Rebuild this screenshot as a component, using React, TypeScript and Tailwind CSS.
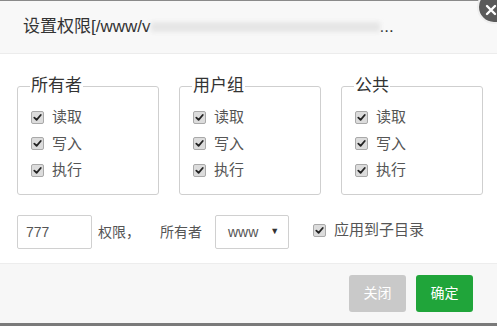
import React from "react";

const font = { fontFamily: '"Liberation Sans", "Noto Sans CJK SC", sans-serif' };

function Check() {
  return (
    <span className="inline-flex items-center justify-center w-[13px] h-[13px] rounded-[2px] border border-[#a9a9a9] bg-[#dcdcdc] shrink-0">
      <svg width="9" height="9" viewBox="0 0 10 10">
        <path d="M1.5 5.2 L4 7.6 L8.6 2.2" fill="none" stroke="#222" strokeWidth="2" strokeLinecap="round" strokeLinejoin="round" />
      </svg>
    </span>
  );
}

function Group({ title }: { title: string }) {
  return (
    <fieldset className="w-[142px] h-[120px] border border-[#cfcfcf] rounded-[3px] pl-[12px] pt-[7px]">
      <legend className="px-[1px] text-[17px] leading-[22px] text-[#333]">{title}</legend>
      {["读取", "写入", "执行"].map((t) => (
        <div key={t} className="flex items-center h-[26.5px] gap-[8px] pl-[1px] text-[15px] text-[#555]">
          <Check />
          <span>{t}</span>
        </div>
      ))}
    </fieldset>
  );
}

export default function App() {
  return (
    <div className="relative w-[497px] h-[326px] overflow-hidden bg-white flex flex-col" style={font}>
      <div className="h-[1px] bg-[#8a8a8a]" />
      <div className="h-[53px] bg-[#f8f8f8] border-b border-[#ececec] pl-[23px] flex items-center text-[17px] text-[#333]">
        <span>设置权限[/www/v</span>
        <span className="inline-block w-[229px] h-[10px] bg-[#e6e6e6] blur-[2px]" />
        <span>...</span>
      </div>

      <div className="flex gap-[20px] pl-[17px] pt-[21px]">
        <Group title="所有者" />
        <Group title="用户组" />
        <Group title="公共" />
      </div>

      <div className="flex items-center pl-[17px] mt-[20px] h-[34px] text-[14px] text-[#555]">
        <div className="w-[75px] h-[34px] border border-[#d0d0d0] rounded-[2px] flex items-center pl-[8px]">777</div>
        <span className="ml-[6px]">权限，</span>
        <span className="ml-[20px]">所有者</span>
        <div className="ml-[13px] w-[74px] h-[34px] border border-[#d0d0d0] rounded-[2px] flex items-center pl-[12px] gap-[12px]">
          <span>www</span>
          <span className="text-[9px] text-[#333]">▼</span>
        </div>
        <div className="ml-[24px] flex items-center gap-[8px] -mt-[4px] text-[15px]">
          <Check />
          <span>应用到子目录</span>
        </div>
      </div>

      <div className="mt-[14px] h-[60px] bg-[#f7f7f7] border-t border-[#ededed] flex items-center justify-end gap-[10px] pr-[24px]">
        <button className="w-[57px] h-[37px] rounded-[3px] bg-[#c9c9c9] text-white text-[14px]">关闭</button>
        <button className="w-[57px] h-[37px] rounded-[3px] bg-[#20a53a] text-white text-[14px]">确定</button>
      </div>
      <div className="flex-1 bg-[#7a7a7a]" />

      <div className="absolute right-[-14px] top-[-10px] w-[34px] h-[34px] rounded-full bg-[#5a5a5a] border-2 border-[#eee] flex items-center justify-center">
        <svg width="12" height="12" viewBox="0 0 12 12" className="-ml-[6px] mt-[6px]">
          <path d="M2 2 L10 10 M10 2 L2 10" stroke="white" strokeWidth="2.4" strokeLinecap="round" />
        </svg>
      </div>
    </div>
  );
}
